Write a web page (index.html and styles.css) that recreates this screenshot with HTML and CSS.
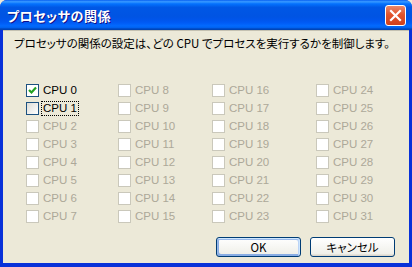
FILE: index.html
```html
<!DOCTYPE html>
<html lang="ja">
<head>
    <meta charset="UTF-8">
    <title>プロセッサの関係</title>
    <link rel="stylesheet" href="styles.css">
</head>
<body>
    <div class="window">
        <div class="titlebar">
            <span class="title">プロセッサの関係</span>
            <button class="close-btn" aria-label="閉じる">
                <svg width="13" height="13" viewBox="0 0 13 13">
                    <path d="M2 2 L11 11 M11 2 L2 11" stroke="#fff" stroke-width="2.2" stroke-linecap="square"/>
                </svg>
            </button>
        </div>
        <div class="content">
            <p class="desc">プロセッサの関係の設定は、どの CPU でプロセスを実行するかを制御します。</p>

            <!-- CPU 一覧 -->
            <div class="cpu-grid" id="cpuGrid"></div>

            <div class="actions">
                <button class="btn default">OK</button>
                <button class="btn">キャンセル</button>
            </div>
        </div>
    </div>
    <script>
        // 4列×8行、列優先で並べる
        const grid = document.getElementById('cpuGrid');
        let html = '';
        for (let row = 0; row < 8; row++) {
            for (let col = 0; col < 4; col++) {
                const n = col * 8 + row;
                let cls = 'cpu disabled';
                if (n === 0) cls = 'cpu checked';
                if (n === 1) cls = 'cpu focus';
                html += `<label class="${cls}"><span class="box"></span><span class="text">CPU ${n}</span></label>`;
            }
        }
        grid.innerHTML = html;
    </script>
</body>
</html>
```

FILE: styles.css
```css
* {
    box-sizing: border-box;
}
body {
    margin: 0;
    background: #ece9d8;
    font-family: "Liberation Sans", "Noto Sans CJK JP", sans-serif;
}
.window {
    width: 412px;
    height: 267px;
    display: flex;
    flex-direction: column;
    background: #0831d9;
    border-radius: 7px 7px 0 0;
    overflow: hidden;
}
.titlebar {
    height: 30px;
    display: flex;
    align-items: center;
    justify-content: space-between;
    padding: 0 6px 0 7px;
    background: linear-gradient(180deg, #0058ee 0%, #3593ff 4%, #288eff 8%, #127dff 10%, #036ffc 14%, #0262ee 20%, #0057e5 24%, #0054e3 56%, #0055eb 66%, #005bf5 76%, #026afe 86%, #0062ef 92%, #0052d6 94%, #0040ab 100%);
}
.title {
    color: #fff;
    font-family: "Noto Sans CJK JP", sans-serif;
    font-weight: bold;
    font-size: 13px;
    font-feature-settings: "palt";
    text-shadow: 1px 1px #0f1089;
    letter-spacing: 0.5px;
    margin-top: 1px;
}
.close-btn {
    width: 21px;
    height: 21px;
    padding: 0;
    display: flex;
    align-items: center;
    justify-content: center;
    border: 1px solid #fff;
    border-radius: 3px;
    background: linear-gradient(180deg, #e9886a, #e2542d 45%, #d2401c);
}
.content {
    flex: 1;
    display: flex;
    flex-direction: column;
    background: #ece9d8;
    margin: 0 3px 4px 3px;
    border-top: 1px solid #c4c1b2;
    padding: 4px 14px 0 11px;
}
.desc {
    margin: 0;
    font-family: "Noto Sans CJK JP", sans-serif;
    font-size: 11.5px;
    font-feature-settings: "palt";
    line-height: 16px;
    color: #000;
}
.cpu-grid {
    display: grid;
    grid-template-columns: 92px 94px 104px auto;
    grid-auto-rows: 18px;
    margin: 33px 0 0 12px;
}
.cpu {
    display: flex;
    align-items: flex-start;
    font-size: 11.5px;
    line-height: 13px;
    color: #aca899;
}
.box {
    width: 13px;
    height: 13px;
    border: 1px solid #cac8bb;
    background: #fff;
    margin-right: 3px;
    flex: none;
}
.text {
    padding: 0 1px;
    border: 1px dotted transparent;
    margin-top: -1px;
    margin-left: -1px;
}
.checked,
.focus {
    color: #000;
}
.checked .box,
.focus .box {
    border-color: #1c5180;
    background: linear-gradient(135deg, #dcdcd7, #fff);
}
.checked .box {
    background: #fff url("data:image/svg+xml,%3Csvg xmlns='http://www.w3.org/2000/svg' width='11' height='11'%3E%3Cpath d='M2 5 L4.5 7.5 L9 2.5' fill='none' stroke='%2321a121' stroke-width='2.2'/%3E%3C/svg%3E") center no-repeat;
}
.focus .text {
    border-color: #000;
}
.actions {
    display: flex;
    justify-content: flex-end;
    gap: 9px;
    margin-top: 9px;
}
.btn {
    width: 85px;
    height: 20px;
    padding: 0;
    font-family: "Noto Sans CJK JP", sans-serif;
    font-size: 11.5px;
    font-feature-settings: "palt";
    color: #000;
    border: 1px solid #003c74;
    border-radius: 3px;
    background: linear-gradient(180deg, #fff, #f0f0ea 86%, #d6d0c5);
}
.btn.default {
    box-shadow: inset -1px 1px #cee7ff, inset 1px 2px #98b8ea, inset -2px 2px #bcd4f6, inset 1px -1px #89ade4, inset 2px -2px #89ade4;
}
```
